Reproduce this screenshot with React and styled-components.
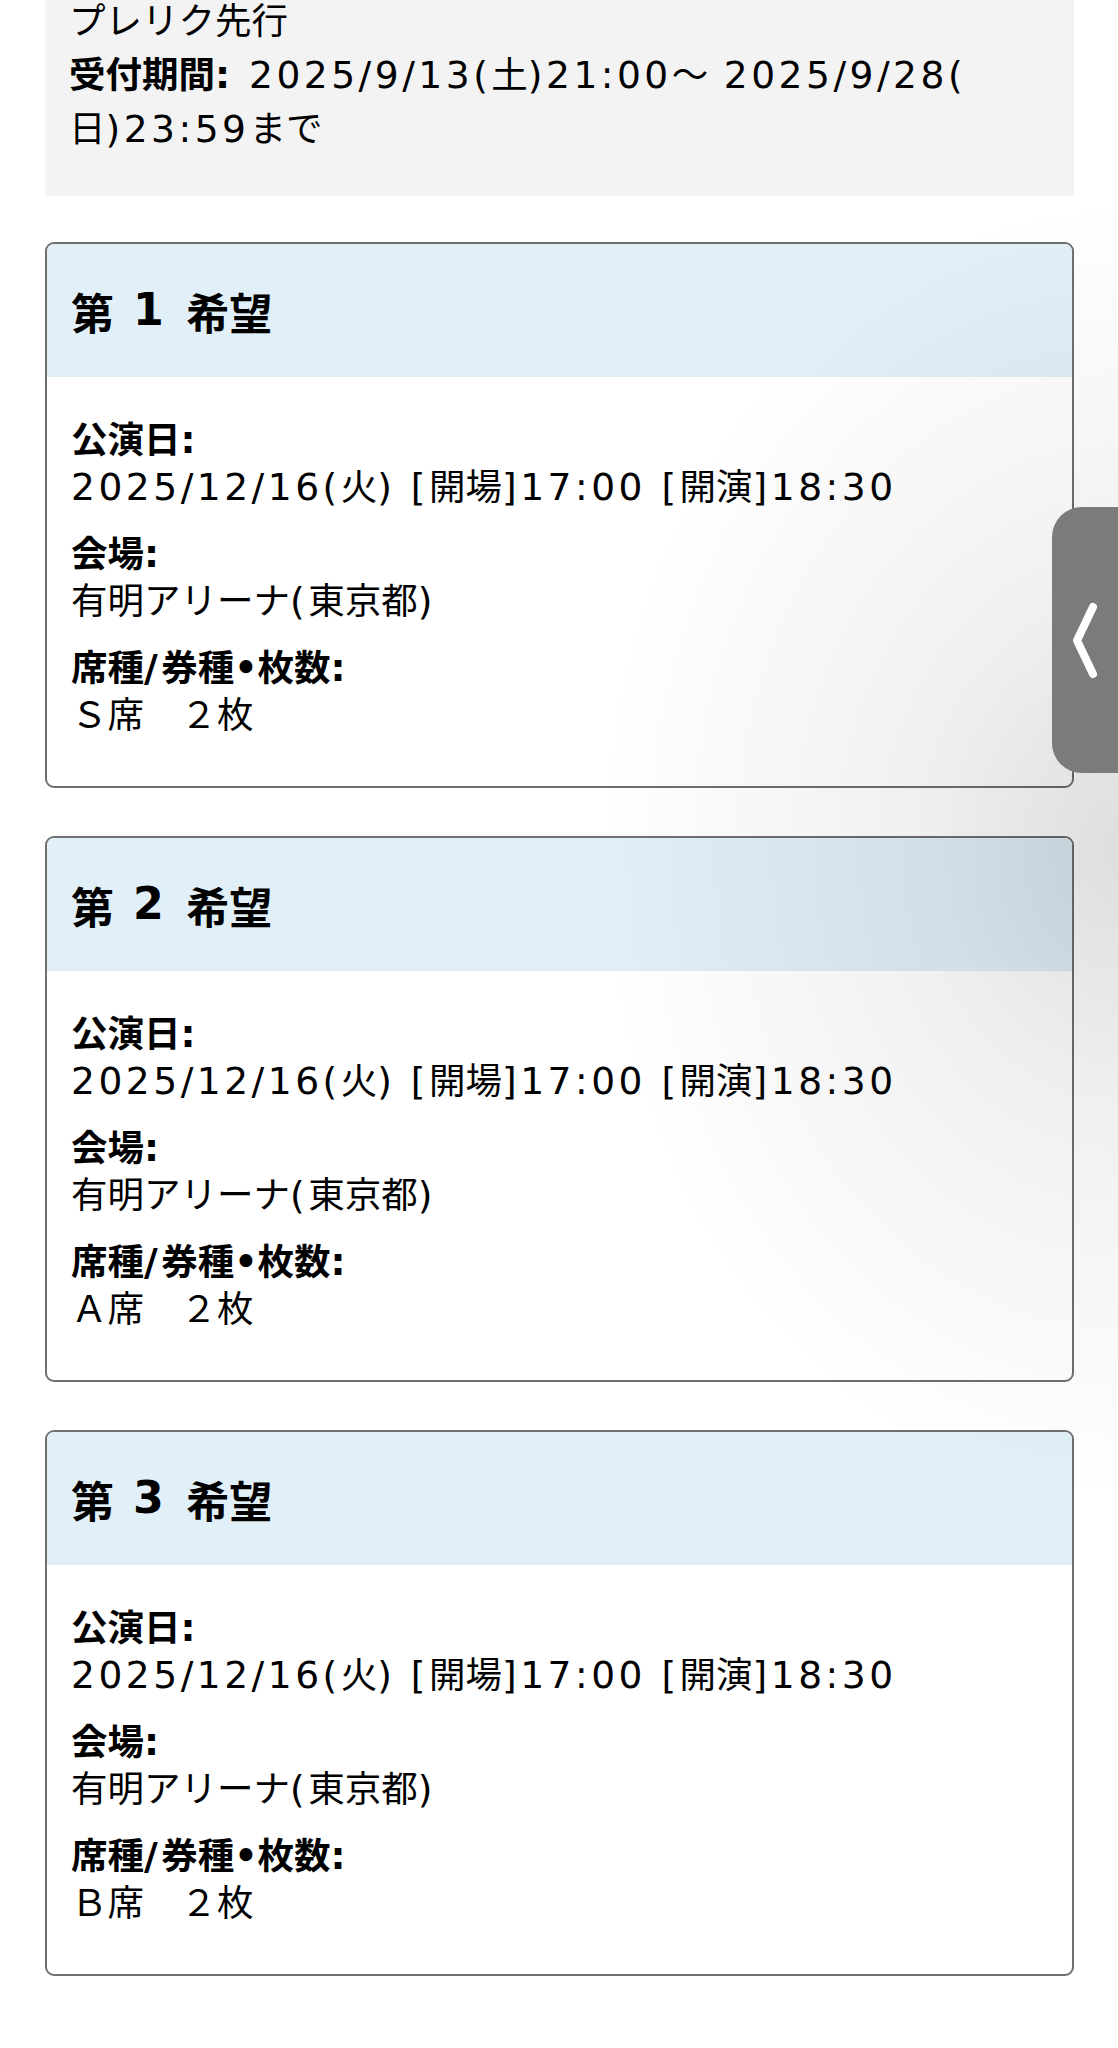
import React from 'react';
import styled, { createGlobalStyle } from 'styled-components';

const GlobalStyle = createGlobalStyle`
  html, body {
    margin: 0;
    padding: 0;
    background: #fff;
  }
  body {
    font-family: "DejaVu Sans", "Noto Sans CJK JP", sans-serif;
    color: #000;
    -webkit-font-smoothing: antialiased;
  }
`;

const wishes = [
  { no: 1, seat: 'Ｓ席　２枚' },
  { no: 2, seat: 'Ａ席　２枚' },
  { no: 3, seat: 'Ｂ席　２枚' },
];

// latin runs are set wider than the japanese text around them
const Mixed = ({ text }) =>
  text
    .split(/([\x20-\x7e]+)/)
    .filter(Boolean)
    .map((part, i) =>
      /^[\x20-\x7e]+$/.test(part) ? <Latin key={i}>{part}</Latin> : part
    );

const App = () => {
  return (
    <>
      <GlobalStyle />
      <Page>
        <Notice>
          <div>プレリク先行</div>
          <div>
            <Label>
              <Mixed text='受付期間:' />
            </Label>
            <Mixed text=' 2025/9/13(土)21:00〜 2025/9/28(' />
            <br />
            <Mixed text='日)23:59まで' />
          </div>
        </Notice>

        <CardList>
          {wishes.map(w => (
            <Card key={w.no}>
              <CardHead>
                <Mixed text={`第 ${w.no} 希望`} />
              </CardHead>
              <CardBody>
                <Term>
                  <Mixed text='公演日:' />
                </Term>
                <Desc>
                  <Mixed text='2025/12/16(火) [開場]17:00 [開演]18:30' />
                </Desc>
                <Term>
                  <Mixed text='会場:' />
                </Term>
                <Desc>
                  <Mixed text='有明アリーナ(東京都)' />
                </Desc>
                <Term>
                  <Mixed text='席種/券種•枚数:' />
                </Term>
                <Desc>{w.seat}</Desc>
              </CardBody>
            </Card>
          ))}
        </CardList>
      </Page>

      <Glow />
      <SideTab aria-label='open'>
        <svg width='28' height='80' viewBox='0 0 28 80'>
          <path
            d='M22 7 L6 40.5 L22 74'
            fill='none'
            stroke='#fff'
            strokeWidth='8'
            strokeLinecap='round'
            strokeLinejoin='round'
          />
        </svg>
      </SideTab>
    </>
  );
};

export default App;

const Page = styled.div`
  margin-top: -29px;
  padding: 0 44px 76px 45px;
`;

const Latin = styled.span`
  font-size: 1.03em;
  line-height: 1;
  letter-spacing: 3.5px;
`;

const Notice = styled.section`
  background: #f3f3f3;
  padding: 24px 24px 39px;
  margin-bottom: 46px;
  font-size: 36.5px;
  line-height: 54px;
`;

const Label = styled.strong`
  font-weight: 700;
`;

const CardList = styled.div`
  display: flex;
  flex-direction: column;
  gap: 48px;
`;

const Card = styled.section`
  border: 2px solid #6f6f6f;
  border-radius: 9px;
  overflow: hidden;
  background: #fff;
`;

const CardHead = styled.h2`
  margin: 0;
  height: 133px;
  display: flex;
  align-items: center;
  padding: 0 24px;
  background: #e1eff8;
  font-size: 43px;
  font-weight: 700;
  white-space: pre;
`;

const CardBody = styled.dl`
  margin: 0;
  padding: 40px 24px 47px;
  font-size: 36.5px;
  line-height: 47px;
`;

const Term = styled.dt`
  font-weight: 700;
`;

const Desc = styled.dd`
  margin: 0 0 20px;

  &:last-child {
    margin-bottom: 0;
  }
`;

const Glow = styled.div`
  position: fixed;
  right: 0;
  top: 200px;
  width: 520px;
  height: 1300px;
  pointer-events: none;
  background: radial-gradient(
    ellipse 100% 50% at 100% 50%,
    rgba(0, 0, 0, 0.13) 0%,
    rgba(0, 0, 0, 0.06) 40%,
    rgba(0, 0, 0, 0) 100%
  );
`;

const SideTab = styled.button`
  position: fixed;
  right: 0;
  top: 507px;
  width: 66px;
  height: 266px;
  padding: 0;
  border: 0;
  border-radius: 30px 0 0 30px;
  background: #7b7b7b;
  display: flex;
  align-items: center;
  justify-content: center;
  cursor: pointer;
`;
